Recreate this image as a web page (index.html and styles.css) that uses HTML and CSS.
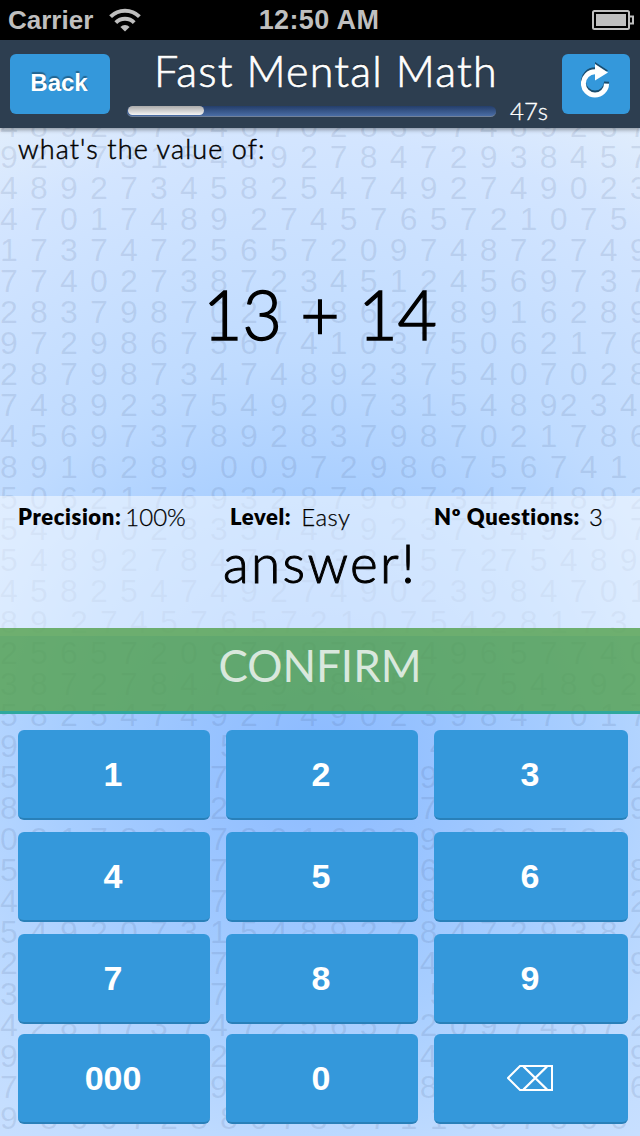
FILE: index.html
```html
<!DOCTYPE html>
<html lang="en">
<head>
<meta charset="utf-8">
<title>Fast Mental Math</title>
<link rel="stylesheet" href="styles.css">
</head>
<body>
<div class="app">
<pre class="digits" aria-hidden="true">4 8 9 2 3 7 5 4 6 7 0 2 8 3 5 7 4 8 9 2 3 7
9 2 0 7 3 1 5 4 8 9 2 7 8 4 7 2 9 3 8 4 5 7
4 8 9 2 7 3 4 5 8 2 5 4 7 4 9 2 7 4 9 0 2 3
4 7 0 1 7 4 8 9  2 7 4 5 7 6 5 7 2 1 0 7 5
1 7 3 7 4 7 2 5 6 5 7 2 0 9 7 4 8 7 2 7 4 9
7 7 4 0 2 7 3 8 7 2 3 4 5 1 2 4 5 6 9 7 3 7
2 8 3 7 9 8 7 0 2 1 7 8 6 2 7 8 9 1 6 2 8 9
9 7 2 9 8 6 7 5 6 7 4 1 0 3 7 5 0 6 2 1 7 6
2 8 7 9 8 7 3 4 7 4 8 9 2 3 7 5 4 0 7 0 2 8
7 4 8 9 2 3 7 5 4 9 2 0 7 3 1 5 4 8 92 3 4
4 5 6 9 7 3 7 8 9 2 8 3 7 9 8 7 0 2 1 7 8 6
8 9 1 6 2 8 9  0 0 9 7 2 9 8 6 7 5 6 7 4 1
5 0 6 2 1 7 6 9 3 2 8 7 9 8 7 3 4 7 4 8 9 2
5 4 0 7 0 2 8 3 5 7 4 8 9 2 3 7 5 4 9 2 0 7
5 4 8 9 2 7 8 4 7 2 9 3 8 4 5 7 27 5 4 8 9
4 5 8 2 5 4 7 4 9 2 7 4 9 0 2 3 9 8 4 7 0 1
8 9  2 7 4 5 7 6 5 7 2 1 0 7 5 4 2 8 1 7 3
2 5 6 5 7 2 0 9 7 4 8 7 2 7 4 9 6 5 7 7 4 0
3 8 7 2 7 8 4 7 2 9 3 8 4 5 7 27 5 4 8 9 2
5 8 2 5 4 7 4 9 2 7 4 9 0 2 3 9 8 4 7 0 1 7
9  2 7 4 5 7 6 5 7 2 1 0 7 5 4 2 8 1 7 3
5 6 5 7 2 0 9 7 4 8 7 2 7 4 9 6 5 7 7 4 0 2
8 7 2 7 8 4 7 2 9 3 8 4 5 7 7 5 4 8 9 2 3 9
0 2 1 7 8 6 2 7 8 9 1 6 2 8 9  0 0 9 7 2 9
5 6 7 4 1 0 3 7 5 0 6 2 1 7 6 9 3 2 8 7 9 8
4 7 4 8 9 2 3 7 5 4 0 7 0 2 8 3 5 7 4 8 9 2
5 4 9 2 0 7 3 1 5 4 8 9 2 7 8 4 7 2 9 3 8 4
2 3 4 5 8 2 5 7 4 9 2 7 4 9 4 9 0 2 3 9 8 9
3 4 7 0 1 7 4 7  2 7 4 5 7 6 5 7 2 1 0 7
4 2 8 1 7 3 7 4 7 2 5 6 5 7 2 0 9 7 4 8 7 2
9 6 5 7 7 4 0 2 7 3 8 7 2 3 4 5 1 2 4 5 6 9
7 3 7 8 9 2 8 9 7 9 8 7 0 2 8 1 7 8 6 2 7 6
9  8 6 0 7 2 8 8 0 7 3 0 7 1 1 6 5 7 8 6 6</pre>

<div class="status">
  <div class="carrier"><span>Carrier</span>
    <svg width="32" height="24" viewBox="0 0 32 24" fill="none" stroke="#bfbfbf" stroke-width="4">
      <path d="M1.6 8.600a20.400 20.400 0 0 1 28.800 0"/><path d="M6.800 14.600a13 13 0 0 1 18.400 0"/>
      <path d="M16 23.500l-4.600-4.600a6.500 6.500 0 0 1 9.200 0z" fill="#bfbfbf" stroke="none"/>
    </svg>
  </div>
  <span class="clock">12:50 AM</span>
  <svg class="battery" width="42" height="20" viewBox="0 0 42 20">
    <rect x="1" y="1" width="36" height="18" rx="1.5" fill="none" stroke="#bfbfbf" stroke-width="2"/>
    <rect x="4" y="4" width="30" height="12" fill="#bfbfbf"/>
    <path d="M38 6.500h3v7h-3" fill="none" stroke="#bfbfbf" stroke-width="2"/>
  </svg>
</div>

<header class="header">
  <button class="back">Back</button>
  <div class="heading">
    <h1 class="title"><span>Fast Mental Math</span></h1>
    <div class="timer">
      <div class="track"><div class="fill"></div></div>
      <span class="seconds">47s</span>
    </div>
  </div>
  <button class="reload" aria-label="Restart">
    <svg width="30" height="36" viewBox="0 0 30 36">
      <path d="M25.600 19.600a11.600 11.600 0 1 1-11.600-11.800h2" fill="none" stroke="currentColor" stroke-width="5"/><path d="M14 0l13 8.500-13 8z" fill="currentColor"/>
    </svg>
  </button>
</header>

<main class="question">
  <p class="prompt">what's the value of:</p>
  <p class="sum">13 + 14</p>
</main>

<section class="panel">
  <div class="stats">
    <span class="stat precision"><b>Precision:</b><i>100%</i></span>
    <span class="stat level"><b>Level:</b><i>Easy</i></span>
    <span class="stat count"><b>Nº Questions:</b><i>3</i></span>
  </div>
  <p class="answer">answer!</p>
</section>

<button class="confirm"><span>CONFIRM</span></button>

<div class="keypad">
  <button class="key">1</button><button class="key">2</button><button class="key">3</button>
  <button class="key">4</button><button class="key">5</button><button class="key">6</button>
  <button class="key">7</button><button class="key">8</button><button class="key">9</button>
  <button class="key">000</button><button class="key">0</button>
  <button class="key" aria-label="Delete">
    <svg class="delete" width="46" height="26" viewBox="0 0 46 26" fill="none" stroke="#fff" stroke-width="2">
      <path d="M13 1h32v24H13L1 13z"/><path d="M16.500 1.500l23.500 23M40 1.500l-23.500 23" stroke-width="2.400"/>
    </svg>
  </button>
</div>
</div>
</body>
</html>
```
FILE: styles.css
```css
* { box-sizing: border-box; }
body { margin: 0; }
p, h1 { margin: 0; font-weight: 300; }
i { font-style: normal; }
button { border: 0; padding: 0; color: #fff; background: #3498db; font-family: "Liberation Sans", Arial, sans-serif; }

.app {
  position: relative;
  width: 640px;
  height: 1136px;
  overflow: hidden;
  display: flex;
  flex-direction: column;
  color: #000;
  font-family: Lato, "Open Sans", sans-serif;
  background: radial-gradient(circle at 320px 760px, #8bbaff 0, #a8ceff 260px, #bfdbff 400px, #d3e5ff 620px, #e2eefc 720px);
}
.app > :not(.digits) { position: relative; flex: none; }

/* Decorative number sheet behind the whole screen */
.digits {
  position: absolute;
  left: 0;
  top: 111px;
  margin: 0;
  font: 32px/31px "Liberation Sans", Arial, sans-serif;
  letter-spacing: 2.2px;
  word-spacing: -1.1px;
  color: rgba(60, 80, 120, .12);
}

.status {
  height: 40px;
  padding: 0 6px 0 8px;
  display: grid;
  grid-template-columns: 1fr auto 1fr;
  align-items: center;
  background: #000;
  color: #bfbfbf;
  font: bold 26px/40px "Liberation Sans", Arial, sans-serif;
}
.carrier { display: flex; align-items: center; gap: 16px; }
.clock { font-size: 27px; letter-spacing: .4px; margin-left: -4px; }
.battery { justify-self: end; }

.header {
  height: 88px;
  padding: 14px 10px;
  display: grid;
  grid-template-columns: 100px 1fr 68px;
  background: #2d3e50;
  box-shadow: 0 2px 4px rgba(0, 0, 0, .35);
  color: #fff;
}
.back, .reload { height: 60px; border-radius: 6px; }
.back { font-size: 24px; font-weight: bold; padding: 0 2px 3px 0; text-shadow: 0 -2px 1px rgba(0, 0, 0, .35); }
.reload { padding: 0; display: flex; justify-content: center; align-items: flex-start; }
.reload svg { margin-top: 10px; filter: drop-shadow(0 -2px 0 rgba(0, 0, 0, .5)); }
.heading { padding-left: 17px; }
.title { height: 46px; margin: -3px 0 1px; padding-left: 27px; font-size: 43px; line-height: 40px; letter-spacing: 1.2px; white-space: nowrap; -webkit-text-stroke: .7px #fff; text-shadow: 0 -1px 1px rgba(0, 0, 0, .5); }
.timer { display: flex; height: 26px; gap: 14px; align-items: center; }
.track { width: 369px; height: 11px; border-radius: 6px; background: linear-gradient(#243e6b, #4a6da5); border-bottom: 1px solid #71819a; }
.fill { width: 76px; height: 9px; margin-left: 1px; border-radius: 5px; background: linear-gradient(#aaa, #f4f4f4); }
.seconds { margin-top: -2px; font-size: 24px; font-weight: 300; -webkit-text-stroke: .3px #fff; }

.question { height: 368px; padding: 5px 18px; }
.prompt { font-size: 27px; line-height: 32px; letter-spacing: 1.1px; -webkit-text-stroke: .5px #000; }
.sum { padding-top: 104px; font-size: 68px; line-height: 90px; text-align: center; -webkit-text-stroke: 1.4px #000; }

.panel { height: 140px; margin-bottom: -8px; background: rgba(255, 255, 255, .5); padding: 6px 18px; }
.stats { height: 30px; display: grid; grid-template-columns: 212px 204px 1fr; font-size: 22px; line-height: 30px; }
.stat { display: flex; white-space: nowrap; }
.stat b { font-weight: 800; letter-spacing: .6px; }
.stat i { font-size: 24px; font-weight: 300; -webkit-text-stroke: .25px #000; }
.precision { gap: 4px; }
.level { gap: 10px; }
.level i { letter-spacing: .5px; }
.count { gap: 9px; }
.answer { text-align: center; font-size: 53px; line-height: 62px; letter-spacing: 2.4px; -webkit-text-stroke: 1px #000; }

.confirm { height: 86px; padding-bottom: 10px; background: rgba(82, 160, 75, .8); border-bottom: 3px solid #2fa89d; color: #d9e8dd; font-family: Lato, sans-serif; font-size: 44px; }

.keypad { padding: 16px 12px 12px 18px; display: grid; grid-template-columns: 192px 192px 194px; grid-template-rows: 102px 102px 100px 90px; column-gap: 16px; }
.key { height: 90px; border-radius: 6px; border-bottom: 2px solid #2980b9; font-size: 34px; font-weight: bold; padding-right: 2px; }
.delete { display: block; margin: 0 auto; }
```
